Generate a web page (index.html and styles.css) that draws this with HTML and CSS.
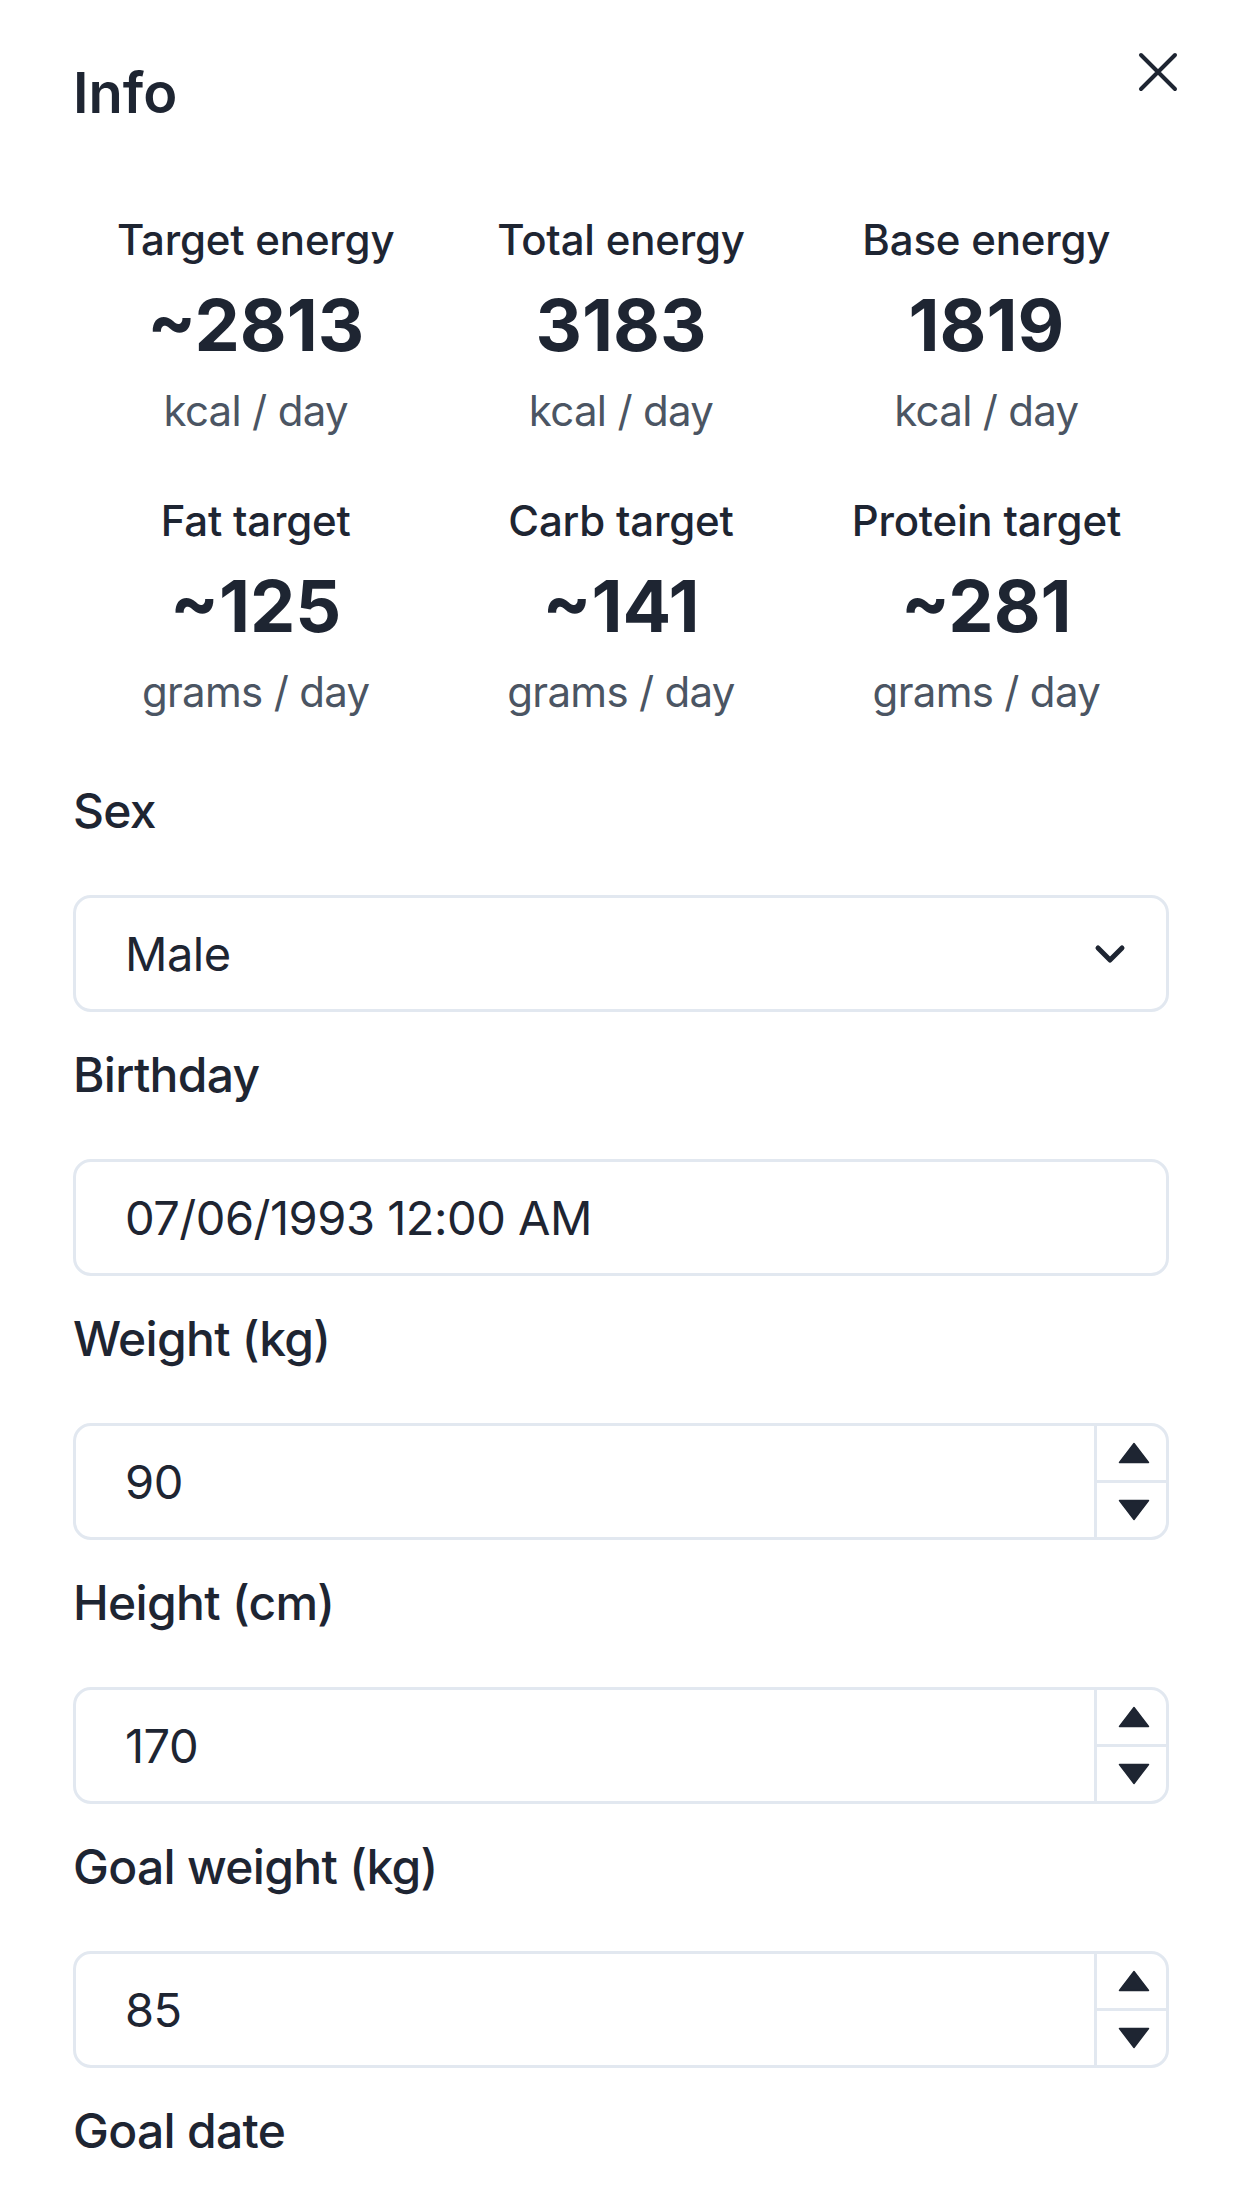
FILE: index.html
```html
<!DOCTYPE html>
<html lang="en">
<head>
<meta charset="utf-8">
<title>Info</title>
<link rel="stylesheet" href="styles.css">
</head>
<body>
<div class="panel">
  <header class="header">
    <h1 class="title">Info</h1>
    <button class="close" aria-label="Close">
      <svg width="40" height="40" viewBox="0 0 40 40" fill="none" stroke="#1e2532" stroke-width="4" stroke-linecap="round">
        <path d="M3 3 L37 37 M37 3 L3 37"/>
      </svg>
    </button>
  </header>

  <section class="stats">
    <div class="stat"><div class="stat-label">Target energy</div><div class="stat-value">~2813</div><div class="stat-unit">kcal / day</div></div>
    <div class="stat"><div class="stat-label">Total energy</div><div class="stat-value">3183</div><div class="stat-unit">kcal / day</div></div>
    <div class="stat"><div class="stat-label">Base energy</div><div class="stat-value">1819</div><div class="stat-unit">kcal / day</div></div>
    <div class="stat"><div class="stat-label">Fat target</div><div class="stat-value">~125</div><div class="stat-unit">grams / day</div></div>
    <div class="stat"><div class="stat-label">Carb target</div><div class="stat-value">~141</div><div class="stat-unit">grams / day</div></div>
    <div class="stat"><div class="stat-label">Protein target</div><div class="stat-value">~281</div><div class="stat-unit">grams / day</div></div>
  </section>

  <form class="form">
    <div class="field">
      <div class="label">Sex</div>
      <div class="control select">
        <span class="value">Male</span>
        <svg class="chevron" width="34" height="22" viewBox="0 0 34 22" fill="none" stroke="#1e2532" stroke-width="5" stroke-linecap="round" stroke-linejoin="round">
          <path d="M5 5 L17 17 L29 5"/>
        </svg>
      </div>
    </div>
    <div class="field">
      <div class="label">Birthday</div>
      <div class="control"><span class="value">07/06/1993 12:00 AM</span></div>
    </div>
    <div class="field">
      <div class="label">Weight (kg)</div>
      <div class="control number">
        <span class="value">90</span>
        <div class="spinner">
          <div class="spin-btn"><svg width="32" height="22" viewBox="0 0 32 22"><path d="M16 1.5 L30.5 20.5 H1.5 Z" fill="#1e2532" stroke="#1e2532" stroke-width="1.5" stroke-linejoin="round"/></svg></div>
          <div class="spin-btn down"><svg width="32" height="22" viewBox="0 0 32 22"><path d="M1.5 1.5 H30.5 L16 20.5 Z" fill="#1e2532" stroke="#1e2532" stroke-width="1.5" stroke-linejoin="round"/></svg></div>
        </div>
      </div>
    </div>
    <div class="field">
      <div class="label">Height (cm)</div>
      <div class="control number">
        <span class="value">170</span>
        <div class="spinner">
          <div class="spin-btn"><svg width="32" height="22" viewBox="0 0 32 22"><path d="M16 1.5 L30.5 20.5 H1.5 Z" fill="#1e2532" stroke="#1e2532" stroke-width="1.5" stroke-linejoin="round"/></svg></div>
          <div class="spin-btn down"><svg width="32" height="22" viewBox="0 0 32 22"><path d="M1.5 1.5 H30.5 L16 20.5 Z" fill="#1e2532" stroke="#1e2532" stroke-width="1.5" stroke-linejoin="round"/></svg></div>
        </div>
      </div>
    </div>
    <div class="field">
      <div class="label">Goal weight (kg)</div>
      <div class="control number">
        <span class="value">85</span>
        <div class="spinner">
          <div class="spin-btn"><svg width="32" height="22" viewBox="0 0 32 22"><path d="M16 1.5 L30.5 20.5 H1.5 Z" fill="#1e2532" stroke="#1e2532" stroke-width="1.5" stroke-linejoin="round"/></svg></div>
          <div class="spin-btn down"><svg width="32" height="22" viewBox="0 0 32 22"><path d="M1.5 1.5 H30.5 L16 20.5 Z" fill="#1e2532" stroke="#1e2532" stroke-width="1.5" stroke-linejoin="round"/></svg></div>
        </div>
      </div>
    </div>
    <div class="field">
      <div class="label">Goal date</div>
      <div class="control"></div>
    </div>
  </form>
</div>
</body>
</html>
```
FILE: styles.css
```css
* { box-sizing: border-box; }

html, body {
  margin: 0;
  padding: 0;
  background: #ffffff;
}

body {
  font-family: Inter, "Noto Sans", "Liberation Sans", sans-serif;
  color: #1e2532;
}

.panel {
  padding: 0 73px;
}

.header {
  display: flex;
  justify-content: space-between;
  align-items: flex-start;
  padding-top: 51px;
}

.title {
  margin: 0;
  font-size: 56px;
  line-height: 84px;
  font-weight: 600;
  letter-spacing: 0;
}

.close {
  border: 0;
  background: none;
  padding: 0;
  margin: 1px -13px 0 0;
  width: 48px;
  height: 40px;
  display: flex;
  align-items: center;
  justify-content: center;
}

.stats {
  display: grid;
  grid-template-columns: repeat(3, 1fr);
  row-gap: 47px;
  margin-top: 73px;
  text-align: center;
}

.stat-label {
  font-size: 42px;
  line-height: 63px;
  font-weight: 500;
  letter-spacing: -0.2px;
}

.stat-value {
  font-size: 72px;
  line-height: 108px;
  font-weight: 700;
}

.stat-unit {
  font-size: 42px;
  line-height: 63px;
  color: #4b5563;
  letter-spacing: -0.7px;
}

.form {
  margin-top: 52px;
}

.field {
  margin-bottom: 27px;
}

.label {
  font-size: 48px;
  line-height: 72px;
  font-weight: 500;
  letter-spacing: -0.7px;
  margin-bottom: 48px;
}

.control {
  height: 117px;
  border: 3px solid #e2e8f0;
  border-radius: 18px;
  display: flex;
  align-items: center;
  padding-left: 49px;
  font-size: 47px;
  line-height: 72px;
  letter-spacing: -0.5px;
  overflow: hidden;
}

.value {
  flex: 1;
}

.select {
  padding-right: 39px;
}

.chevron {
  display: block;
}

.number {
  align-items: stretch;
}

.number .value {
  display: flex;
  align-items: center;
}

.spinner {
  width: 72px;
  border-left: 3px solid #e2e8f0;
  display: flex;
  flex-direction: column;
}

.spin-btn {
  flex: 1;
  display: flex;
  align-items: center;
  justify-content: center;
  padding-left: 4px;
}

.spin-btn.down {
  border-top: 3px solid #e2e8f0;
}
```
